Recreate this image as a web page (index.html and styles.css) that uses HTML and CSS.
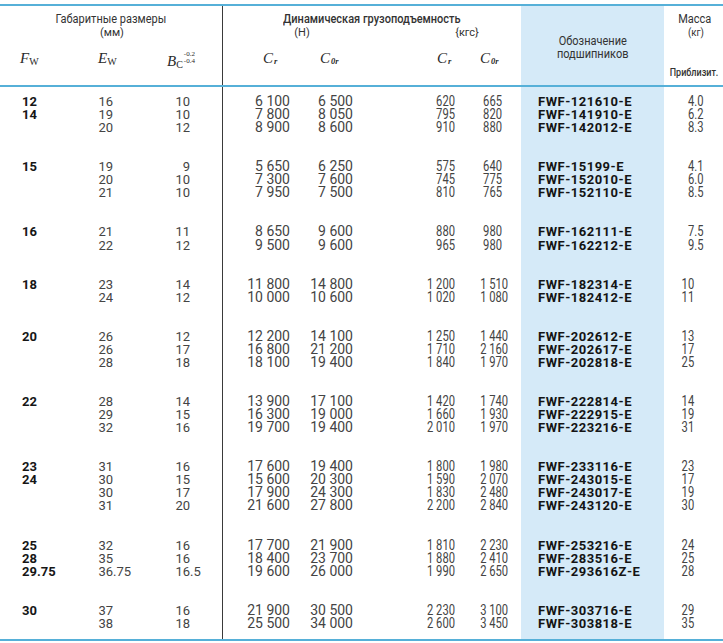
FILE: index.html
```html
<!DOCTYPE html>
<html lang="ru">
<head>
<meta charset="utf-8">
<title>FWF</title>
<link rel="stylesheet" href="styles.css">
</head>
<body>
<div class="table">
  <div class="head">
    <div class="h-gab"><span class="cn">Габаритные размеры</span></div>
    <div class="h-dyn"><span class="cn">Динамическая грузоподъемность</span></div>
    <div class="h-code"><span class="cn">Обозначение</span><span class="cn">подшипников</span></div>
    <div class="h-mass"><span class="cn">Масса</span><span class="cn unit">(кг)</span><span class="cn appr">Приблизит.</span></div>
    <div class="h-mm">(мм)</div>
    <div class="h-n">(Н)</div>
    <div class="h-kgs">{кгс}</div>
    <div class="sym s1"><i>F</i><sub>W</sub></div>
    <div class="sym s2"><i>E</i><sub>W</sub></div>
    <div class="sym s3"><i>B</i><sub>C</sub><span class="tol"><span>-0.2</span><span>-0.4</span></span></div>
    <div class="sym s4"><i>C</i><sub class="si"><i>r</i></sub></div>
    <div class="sym s5"><i>C</i><sub class="si"><i>0r</i></sub></div>
    <div class="sym s6"><i>C</i><sub class="si"><i>r</i></sub></div>
    <div class="sym s7"><i>C</i><sub class="si"><i>0r</i></sub></div>
  </div>

  <div class="grp">
    <div class="fw">12<br>14</div>
    <div class="ew">16<br>19<br>20</div>
    <div class="bc">10<br>10<br>12</div>
    <div class="cr">6&nbsp;100<br>7&nbsp;800<br>8&nbsp;900</div>
    <div class="c0r">6&nbsp;500<br>8&nbsp;050<br>8&nbsp;600</div>
    <div class="kr">620<br>795<br>910</div>
    <div class="k0r">665<br>820<br>880</div>
    <div class="code">FWF-121610-E<br>FWF-141910-E<br>FWF-142012-E</div>
    <div class="mass">4<span class="fr">.0</span><br>6<span class="fr">.2</span><br>8<span class="fr">.3</span></div>
  </div>

  <div class="grp">
    <div class="fw">15</div>
    <div class="ew">19<br>20<br>21</div>
    <div class="bc">9<br>10<br>10</div>
    <div class="cr">5&nbsp;650<br>7&nbsp;300<br>7&nbsp;950</div>
    <div class="c0r">6&nbsp;250<br>7&nbsp;600<br>7&nbsp;500</div>
    <div class="kr">575<br>745<br>810</div>
    <div class="k0r">640<br>775<br>765</div>
    <div class="code">FWF-15199-E<br>FWF-152010-E<br>FWF-152110-E</div>
    <div class="mass">4<span class="fr">.1</span><br>6<span class="fr">.0</span><br>8<span class="fr">.5</span></div>
  </div>

  <div class="grp">
    <div class="fw">16</div>
    <div class="ew">21<br>22</div>
    <div class="bc">11<br>12</div>
    <div class="cr">8&nbsp;650<br>9&nbsp;500</div>
    <div class="c0r">9&nbsp;600<br>9&nbsp;600</div>
    <div class="kr">880<br>965</div>
    <div class="k0r">980<br>980</div>
    <div class="code">FWF-162111-E<br>FWF-162212-E</div>
    <div class="mass">7<span class="fr">.5</span><br>9<span class="fr">.5</span></div>
  </div>

  <div class="grp">
    <div class="fw">18</div>
    <div class="ew">23<br>24</div>
    <div class="bc">14<br>12</div>
    <div class="cr">11&nbsp;800<br>10&nbsp;000</div>
    <div class="c0r">14&nbsp;800<br>10&nbsp;600</div>
    <div class="kr">1&nbsp;200<br>1&nbsp;020</div>
    <div class="k0r">1&nbsp;510<br>1&nbsp;080</div>
    <div class="code">FWF-182314-E<br>FWF-182412-E</div>
    <div class="mass">10<br>11</div>
  </div>

  <div class="grp">
    <div class="fw">20</div>
    <div class="ew">26<br>26<br>28</div>
    <div class="bc">12<br>17<br>18</div>
    <div class="cr">12&nbsp;200<br>16&nbsp;800<br>18&nbsp;100</div>
    <div class="c0r">14&nbsp;100<br>21&nbsp;200<br>19&nbsp;400</div>
    <div class="kr">1&nbsp;250<br>1&nbsp;710<br>1&nbsp;840</div>
    <div class="k0r">1&nbsp;440<br>2&nbsp;160<br>1&nbsp;970</div>
    <div class="code">FWF-202612-E<br>FWF-202617-E<br>FWF-202818-E</div>
    <div class="mass">13<br>17<br>25</div>
  </div>

  <div class="grp">
    <div class="fw">22</div>
    <div class="ew">28<br>29<br>32</div>
    <div class="bc">14<br>15<br>16</div>
    <div class="cr">13&nbsp;900<br>16&nbsp;300<br>19&nbsp;700</div>
    <div class="c0r">17&nbsp;100<br>19&nbsp;000<br>19&nbsp;400</div>
    <div class="kr">1&nbsp;420<br>1&nbsp;660<br>2&nbsp;010</div>
    <div class="k0r">1&nbsp;740<br>1&nbsp;930<br>1&nbsp;970</div>
    <div class="code">FWF-222814-E<br>FWF-222915-E<br>FWF-223216-E</div>
    <div class="mass">14<br>19<br>31</div>
  </div>

  <div class="grp">
    <div class="fw">23<br>24</div>
    <div class="ew">31<br>30<br>30<br>31</div>
    <div class="bc">16<br>15<br>17<br>20</div>
    <div class="cr">17&nbsp;600<br>15&nbsp;600<br>17&nbsp;900<br>21&nbsp;600</div>
    <div class="c0r">19&nbsp;400<br>20&nbsp;300<br>24&nbsp;300<br>27&nbsp;800</div>
    <div class="kr">1&nbsp;800<br>1&nbsp;590<br>1&nbsp;830<br>2&nbsp;200</div>
    <div class="k0r">1&nbsp;980<br>2&nbsp;070<br>2&nbsp;480<br>2&nbsp;840</div>
    <div class="code">FWF-233116-E<br>FWF-243015-E<br>FWF-243017-E<br>FWF-243120-E</div>
    <div class="mass">23<br>17<br>19<br>30</div>
  </div>

  <div class="grp">
    <div class="fw">25<br>28<br>29.75</div>
    <div class="ew">32<br>35<br>36<span class="fr">.75</span></div>
    <div class="bc">16<br>16<br>16<span class="fr">.5</span></div>
    <div class="cr">17&nbsp;700<br>18&nbsp;400<br>19&nbsp;600</div>
    <div class="c0r">21&nbsp;900<br>23&nbsp;700<br>26&nbsp;000</div>
    <div class="kr">1&nbsp;810<br>1&nbsp;880<br>1&nbsp;990</div>
    <div class="k0r">2&nbsp;230<br>2&nbsp;410<br>2&nbsp;650</div>
    <div class="code">FWF-253216-E<br>FWF-283516-E<br>FWF-293616Z-E</div>
    <div class="mass">24<br>25<br>28</div>
  </div>

  <div class="grp">
    <div class="fw">30</div>
    <div class="ew">37<br>38</div>
    <div class="bc">16<br>18</div>
    <div class="cr">21&nbsp;900<br>25&nbsp;500</div>
    <div class="c0r">30&nbsp;500<br>34&nbsp;000</div>
    <div class="kr">2&nbsp;230<br>2&nbsp;600</div>
    <div class="k0r">3&nbsp;100<br>3&nbsp;450</div>
    <div class="code">FWF-303716-E<br>FWF-303818-E</div>
    <div class="mass">29<br>35</div>
  </div>
</div>
</body>
</html>
```

FILE: styles.css
```css
* {
  box-sizing: border-box;
  margin: 0;
  padding: 0;
}

body {
  margin: 0;
  background: #ffffff;
  font-family: Roboto, "Liberation Sans", sans-serif;
  color: #3c3c3c;
}

.table {
  width: 723px;
  margin-top: 4px;
  border-top: 2px solid #56b0d8;
  border-bottom: 2px solid #56b0d8;
}

.head,
.grp {
  display: grid;
  grid-template-columns: 62px 78px 82px 78px 70px 100px 51px 143px 59px;
}

.head {
  grid-template-rows: 20px 14px 45px;
  border-bottom: 2px solid #56b0d8;
  color: #333333;
  font-size: 12.5px;
  line-height: 14px;
}

.cn {
  display: inline-block;
  transform: scaleX(0.88);
  white-space: nowrap;
}

.h-gab {
  grid-column: 1 / 4;
  grid-row: 1;
  text-align: center;
  padding-top: 6px;
}

.h-dyn {
  grid-column: 4 / 8;
  grid-row: 1;
  text-align: center;
  padding-top: 6px;
  border-left: 1px solid #3a3a3a;
  font-weight: 500;
}

.h-code {
  grid-column: 8;
  grid-row: 1 / 4;
  background: #d5eaf8;
  display: flex;
  flex-direction: column;
  align-items: center;
  justify-content: center;
  padding-top: 2px;
  line-height: 13px;
}

.h-mass {
  grid-column: 9;
  grid-row: 1 / 4;
  display: flex;
  flex-direction: column;
  align-items: center;
  padding-top: 6px;
  padding-bottom: 6px;
  padding-left: 2px;
}

.h-mass .unit {
  font-size: 11px;
  padding-left: 3px;
}

.h-mass .appr {
  margin-top: auto;
  font-size: 10px;
  font-weight: 500;
  line-height: 12px;
  transform: scaleX(0.9);
}

.h-mm {
  grid-column: 1 / 4;
  grid-row: 2;
  text-align: center;
  font-size: 11px;
  padding-left: 2px;
}

.h-n {
  grid-column: 4 / 6;
  grid-row: 2;
  border-left: 1px solid #3a3a3a;
  text-align: center;
  font-size: 11px;
  padding-left: 11px;
}

.h-kgs {
  grid-column: 6 / 8;
  grid-row: 2;
  text-align: center;
  font-size: 11px;
  padding-left: 43px;
}

.sym {
  grid-row: 3;
  padding-top: 11px;
  font-family: "Liberation Serif", "DejaVu Serif", serif;
  font-size: 15px;
  line-height: 14px;
  color: #2a2a2a;
  white-space: nowrap;
}

.sym sub {
  font-size: 10px;
  vertical-align: -2px;
  line-height: 0;
}

.sym sub.si {
  font-size: 8.5px;
  vertical-align: -1px;
  font-weight: 700;
  margin-left: 1px;
}

.s1 { grid-column: 1; padding-left: 20px; }
.s2 { grid-column: 2; padding-left: 36px; }
.s3 { grid-column: 3; padding-left: 27px; }
.s4 { grid-column: 4; padding-left: 40px; border-left: 1px solid #3a3a3a; }
.s5 { grid-column: 5; padding-left: 20px; }
.s6 { grid-column: 6; padding-left: 67px; }
.s7 { grid-column: 7; padding-left: 10px; }

.tol {
  display: inline-flex;
  flex-direction: column;
  font-size: 7px;
  line-height: 7px;
  vertical-align: 10px;
  margin-left: 1px;
}

.grp {
  font-size: 13px;
  line-height: 13.05px;
  color: #444444;
  white-space: nowrap;
}

.grp > div {
  padding-bottom: 26.1px;
}

.grp:nth-child(2) > div {
  padding-top: 8px;
}

.grp:last-child > div {
  padding-bottom: 9px;
}

.fw {
  padding-left: 22px;
  font-weight: 700;
  color: #161616;
}

.ew {
  text-align: right;
  padding-right: 27px;
}

.bc {
  text-align: right;
  padding-right: 32px;
}

.cr {
  text-align: right;
  padding-right: 10px;
  font-size: 14px;
  border-left: 1px solid #3a3a3a;
}

.c0r {
  text-align: right;
  padding-right: 17px;
  font-size: 14px;
}

.kr,
.k0r,
.mass {
  text-align: right;
  font-size: 14px;
  transform: scaleX(0.8);
  transform-origin: right center;
}

.kr { padding-right: 18.75px; }
.k0r { padding-right: 23.75px; }
.mass { padding-right: 36px; }

.code {
  background: #d5eaf8;
  padding-left: 17px;
  font-weight: 700;
  letter-spacing: 0.5px;
  color: #141414;
}

.fr {
  display: inline-block;
  width: 0;
  text-align: left;
  white-space: nowrap;
}
```
